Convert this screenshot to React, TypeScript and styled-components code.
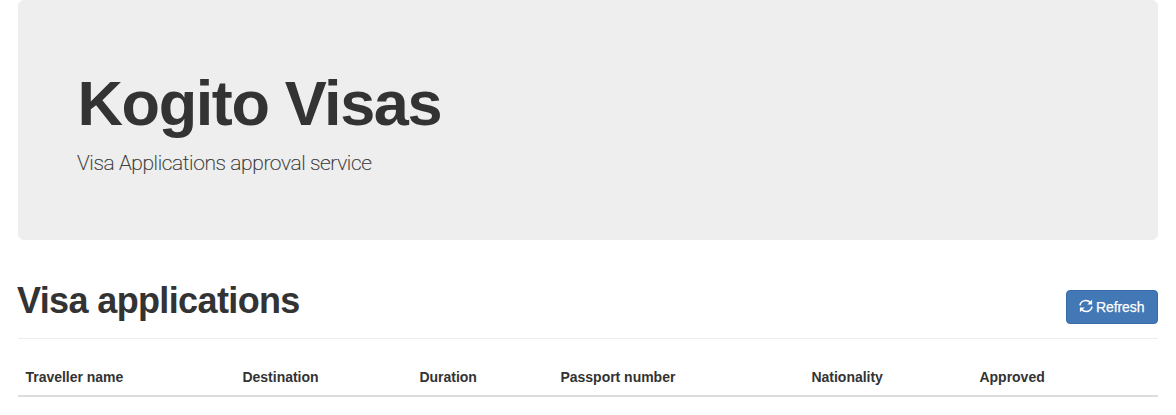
import React from 'react';
import styled, { createGlobalStyle } from 'styled-components';

const GlobalStyle = createGlobalStyle`
  *, *::before, *::after { box-sizing: border-box; }
  body {
    margin: 0;
    background: #fff;
    color: #333;
    font: 14px/20px "Liberation Sans", Arial, sans-serif;
  }
`;

const Page = styled.main`
  padding: 0 18px;
`;

const Jumbotron = styled.header`
  height: 240px;
  padding: 69px 60px 0 59.5px;
  background: #eee;
  border-radius: 6px;
`;

const Title = styled.h1`
  margin: 0;
  font-size: 63px;
  line-height: 69px;
  font-weight: 700;
  letter-spacing: -1.4px;
`;

const Lead = styled.p`
  margin: 10px 0 0 -0.5px;
  font-family: Roboto, "Liberation Sans", sans-serif;
  font-size: 21px;
  line-height: 30px;
  font-weight: 200;
  letter-spacing: -0.4px;
  -webkit-text-stroke: 0.2px #333;
`;

const SectionHeader = styled.div`
  display: flex;
  justify-content: space-between;
  align-items: flex-start;
  height: 59px;
  margin: 40px 0 20px;
  border-bottom: 1px solid #eee;
`;

const SectionTitle = styled.h2`
  margin: 1px 0 0 -1px;
  font-size: 36px;
  line-height: 40px;
  font-weight: 700;
  letter-spacing: -0.63px;
`;

const RefreshButton = styled.button`
  display: flex;
  align-items: center;
  gap: 3px;
  width: 92px;
  height: 34px;
  margin-top: 10px;
  padding: 0 12px;
  border: 1px solid #386ca5;
  border-radius: 4px;
  background: #4178b5;
  color: #fff;
  font: inherit;
  letter-spacing: -0.1px;
  -webkit-text-stroke: 0.25px #fff;
  white-space: nowrap;
`;

const Icon = styled.svg`
  flex: none;
  width: 14px;
  height: 14px;
  position: relative;
  top: -1px;
`;

const Table = styled.table`
  width: 100%;
  table-layout: fixed;
  border-collapse: separate;
  border-spacing: 0;
`;

const HeadCell = styled.th<{ $width: number }>`
  width: ${(p) => p.$width}px;
  height: 38px;
  padding: 8px 8px 8px 7.5px;
  border-bottom: 2px solid #ddd;
  text-align: left;
  line-height: 20px;
  letter-spacing: -0.02px;
  white-space: nowrap;
`;

const columns = [
  { label: 'Traveller name', width: 217 },
  { label: 'Destination', width: 177 },
  { label: 'Duration', width: 141 },
  { label: 'Passport number', width: 251 },
  { label: 'Nationality', width: 168 },
  { label: 'Approved', width: 186 },
];

export default function App() {
  return (
    <>
      <GlobalStyle />
      <Page>
        <Jumbotron>
          <Title>Kogito Visas</Title>
          <Lead>Visa Applications approval service</Lead>
        </Jumbotron>
        <SectionHeader>
          <SectionTitle>Visa applications</SectionTitle>
          <RefreshButton type="button">
            <Icon viewBox="0 0 14 14" aria-hidden="true">
              <path d="M1 6.4C1.4 3.4 4 1.5 6.8 1.5C8.6 1.5 10.2 2.2 11.3 3.5M13 7.6C12.6 10.6 10 12.5 7.2 12.5C5.4 12.5 3.8 11.8 2.7 10.5" fill="none" stroke="#fff" strokeWidth="1.7" />
              <path d="M13.1 .8V5.6H8.3ZM.9 13.2V8.4H5.7Z" fill="#fff" />
            </Icon>
            Refresh
          </RefreshButton>
        </SectionHeader>
        <Table>
          <thead>
            <tr>
              {columns.map((c) => (
                <HeadCell key={c.label} $width={c.width}>{c.label}</HeadCell>
              ))}
            </tr>
          </thead>
        </Table>
      </Page>
    </>
  );
}
